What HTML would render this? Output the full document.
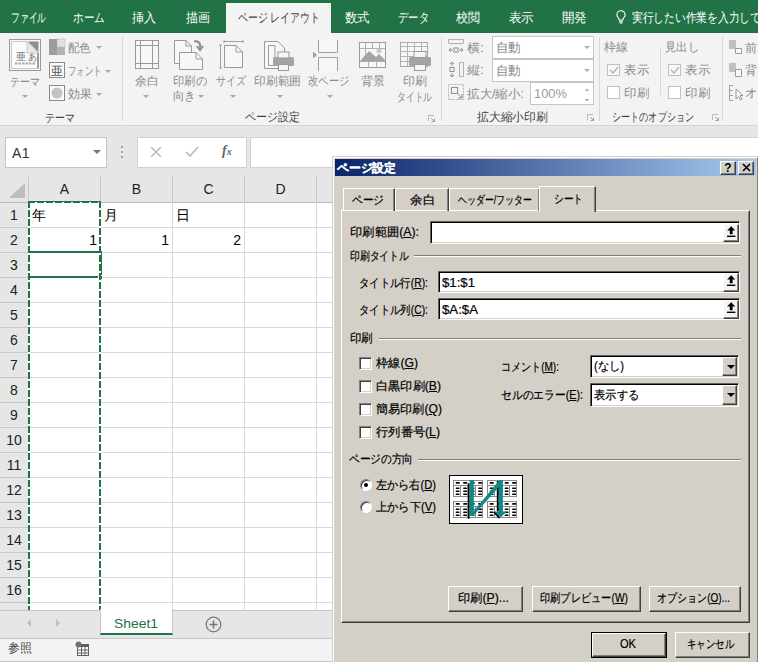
<!DOCTYPE html>
<html><head><meta charset="utf-8">
<style>
*{box-sizing:border-box;margin:0;padding:0}
html,body{width:758px;height:662px;overflow:hidden;background:#e6e6e6;font-family:"Liberation Sans",sans-serif;position:relative}
.a{position:absolute;white-space:nowrap}
svg{position:absolute;overflow:visible}
#tabs{position:absolute;left:0;top:0;width:758px;height:33px;background:#217346}
.tab{position:absolute;top:10px;font-size:13px;color:#fff;line-height:15px;white-space:nowrap}
#ribbon{position:absolute;left:0;top:33px;width:758px;height:93px;background:#f3f3f3;border-bottom:1px solid #d4d4d4}
.rl{position:absolute;font-size:12px;color:#8a8a8a;line-height:13px;white-space:nowrap}
.gl{position:absolute;font-size:12px;color:#444;line-height:13px;white-space:nowrap}
.sep{position:absolute;top:37px;width:1px;height:84px;background:#d8d8d8}
.dd{position:absolute;width:0;height:0;border-left:3px solid transparent;border-right:3px solid transparent;border-top:3px solid #a8a8a8}
.col{position:absolute;top:176px;height:26px;background:#e6e6e6;border-right:1px solid #c8c8c8;border-bottom:1px solid #bababa;font-size:14px;color:#222;text-align:center;line-height:27px}
.row{position:absolute;left:0;width:29px;height:25px;background:#e6e6e6;border-bottom:1px solid #c8c8c8;border-right:1px solid #bababa;font-size:14px;color:#222;text-align:center;line-height:24px}
.hl{position:absolute;left:29px;width:304px;height:1px;background:#d9d9d9}
.vl{position:absolute;top:202px;width:1px;height:408px;background:#d9d9d9}
.d{position:absolute;font-size:12px;color:#000;line-height:13px;white-space:nowrap;-webkit-text-stroke:0.2px currentColor}
.inp{position:absolute;background:#fff;border:1px solid;border-color:#606060 #fff #fff #606060;box-shadow:inset 1px 1px 0 #000, inset -1px -1px 0 #d4d0c8}
.btn{position:absolute;background:#d4d0c8;border:1px solid;border-color:#fff #404040 #404040 #fff;box-shadow:inset -1px -1px 0 #808080;font-size:12px;text-align:center;color:#000;white-space:nowrap}
.chk{position:absolute;width:13px;height:13px;background:#fff;border:1px solid;border-color:#808080 #fff #fff #808080;box-shadow:inset 1px 1px 0 #404040, inset -1px -1px 0 #d4d0c8}
.hr{position:absolute;height:2px;border-top:1px solid #808080;border-bottom:1px solid #fff}
u{text-decoration:underline}

</style></head><body>
<div id="tabs">
  <div class="tab" style="left:11px;--tw:35px;transform:scaleX(0.6731);transform-origin:0 0">ファイル</div>
  <div class="tab" style="left:73px;--tw:32px;transform:scaleX(0.8205);transform-origin:0 0">ホーム</div>
  <div class="tab" style="left:132px;--tw:24px;transform:scaleX(0.9231);transform-origin:0 0">挿入</div>
  <div class="tab" style="left:186px;--tw:24px;transform:scaleX(0.9231);transform-origin:0 0">描画</div>
  <div class="a" style="left:226px;top:3px;width:105px;height:31px;background:#f3f3f3"></div>
  <div class="tab" style="left:238px;color:#444;--tw:82px;transform:scaleX(0.7619);transform-origin:0 0">ページ レイアウト</div>
  <div class="tab" style="left:345px;--tw:25px;transform:scaleX(0.9615);transform-origin:0 0">数式</div>
  <div class="tab" style="left:398px;--tw:31px;transform:scaleX(0.7949);transform-origin:0 0">データ</div>
  <div class="tab" style="left:456px;--tw:24px;transform:scaleX(0.9231);transform-origin:0 0">校閲</div>
  <div class="tab" style="left:509px;--tw:25px;transform:scaleX(0.9615);transform-origin:0 0">表示</div>
  <div class="tab" style="left:562px;--tw:25px;transform:scaleX(0.9615);transform-origin:0 0">開発</div>
  <svg style="left:616px;top:10px" width="10" height="14" viewBox="0 0 10 14"><path d="M5 0.8C2.6 0.8 0.9 2.5 0.9 4.7c0 1.6 1 2.6 1.6 3.4.5.6.6 1.2.6 1.9h3.8c0-.7.1-1.3.6-1.9.6-.8 1.6-1.8 1.6-3.4C9.1 2.5 7.4.8 5 .8z" fill="none" stroke="#fff" stroke-width="1.1"/><path d="M3.1 11.3h3.8M3.5 12.9h3" stroke="#fff" stroke-width="1.1"/></svg>
  <div class="tab" style="left:632px;--tw:172px;transform:scaleX(0.8269);transform-origin:0 0">実行したい作業を入力してください</div>
</div>

<div id="ribbon"></div>
<!-- テーマ group -->
<svg style="left:9px;top:39px" width="32" height="32" viewBox="0 0 32 32">
  <rect x="0.5" y="0.5" width="31" height="31" fill="#f7f7f7" stroke="#9a9a9a"/>
  <path d="M2.5 2.5H18L29.5 14V29.5H2.5Z" fill="#fbfbfb" stroke="#c8c8c8"/>
  <path d="M18 2.5L29.5 14H18Z" fill="#e8e8e8" stroke="#c8c8c8"/>
  <path d="M19 2.5H29.5V13Z" fill="#8e8e8e"/>
  <rect x="28" y="14" width="2" height="15.5" fill="#a0a0a0"/>
  <text x="7" y="21" font-size="10" fill="#707070" font-family="Liberation Sans">亜</text>
  <text x="18.5" y="21" font-size="9" fill="#707070" font-family="Liberation Sans">あ</text>
  <path d="M6 24.5H27" stroke="#a8a8a8" stroke-width="2" stroke-dasharray="2.5 1"/>
</svg>
<div class="rl" style="left:10px;top:76px;--tw:30px;transform:scaleX(0.8333);transform-origin:0 0">テーマ</div>
<div class="dd" style="left:22px;top:95px"></div>

<svg style="left:49px;top:39px" width="16" height="16"><rect x="0" y="0" width="8" height="16" fill="#9c9c9c"/><rect x="8" y="0" width="8" height="8" fill="#e0e0e0" stroke="#b0b0b0" stroke-width="0.5"/><rect x="8" y="8" width="8" height="8" fill="#b4b4b4"/></svg>
<div class="rl" style="left:68px;top:42px;--tw:23px;transform:scaleX(0.9583);transform-origin:0 0">配色</div>
<div class="dd" style="left:96px;top:46px"></div>
<svg style="left:49px;top:62px" width="16" height="16"><rect x="0.5" y="0.5" width="15" height="15" fill="#fafafa" stroke="#8a8a8a"/><text x="2" y="13" font-size="12" fill="#555" font-family="Liberation Sans">亜</text></svg>
<div class="rl" style="left:68px;top:65px;--tw:34px;transform:scaleX(0.7083);transform-origin:0 0">フォント</div>
<div class="dd" style="left:105px;top:70px"></div>
<svg style="left:49px;top:85px" width="16" height="16"><rect x="0.5" y="0.5" width="15" height="15" fill="#fafafa" stroke="#8a8a8a"/><circle cx="8" cy="8" r="5.5" fill="#c4c4c4"/></svg>
<div class="rl" style="left:68px;top:88px;--tw:24px;transform:scaleX(1.0000);transform-origin:0 0">効果</div>
<div class="dd" style="left:96px;top:93px"></div>
<div class="gl" style="left:45px;top:112px;--tw:30px;transform:scaleX(0.8333);transform-origin:0 0">テーマ</div>
<div class="sep" style="left:122px"></div>

<!-- ページ設定 group -->
<svg style="left:135px;top:40px" width="24" height="29" viewBox="0 0 24 29"><rect x="0.5" y="0.5" width="23" height="28" fill="#f7f7f7" stroke="#9a9a9a"/><path d="M5.5 0.5V28.5M17.5 0.5V28.5M0.5 5.5H23.5M0.5 23.5H23.5" stroke="#9a9a9a"/></svg>
<div class="rl" style="left:135px;top:75px;--tw:24px;transform:scaleX(1.0000);transform-origin:0 0">余白</div>
<div class="dd" style="left:143px;top:95px"></div>

<svg style="left:173px;top:39px" width="31" height="32" viewBox="0 0 31 32"><path d="M1.5 1.5H13L18.5 7V24.5H1.5Z" fill="#f7f7f7" stroke="#9a9a9a"/><path d="M6.5 13.5H23L29.5 20V30.5H6.5Z" fill="#f7f7f7" stroke="#9a9a9a"/><path d="M23 13.5V20H29.5" fill="none" stroke="#9a9a9a"/><path d="M13 1.5V7H18.5" fill="none" stroke="#9a9a9a"/><path d="M21 2.5C25 1.5 28 4 27 8.5" fill="none" stroke="#8a8a8a" stroke-width="2"/><path d="M24 7L27 11L30 7" fill="none" stroke="#8a8a8a" stroke-width="2"/></svg>
<div class="rl" style="left:173px;top:75px;--tw:34px;transform:scaleX(0.9444);transform-origin:0 0">印刷の</div>
<div class="rl" style="left:173px;top:90px;--tw:23px;transform:scaleX(0.9583);transform-origin:0 0">向き</div>
<div class="dd" style="left:198px;top:95px"></div>

<svg style="left:219px;top:40px" width="25" height="29" viewBox="0 0 25 29"><path d="M5 1.5H24M5 0V3M24 0V3" stroke="#a0a0a0"/><path d="M1.5 5V28M0 5H3M0 28H3" stroke="#a0a0a0"/><path d="M5.5 5.5H17L23.5 12V27.5H5.5Z" fill="#f7f7f7" stroke="#9a9a9a"/><path d="M17 5.5V12H23.5" fill="none" stroke="#9a9a9a"/></svg>
<div class="rl" style="left:216px;top:75px;--tw:30px;transform:scaleX(0.8333);transform-origin:0 0">サイズ</div>
<div class="dd" style="left:230px;top:95px"></div>

<svg style="left:264px;top:40px" width="31" height="32" viewBox="0 0 31 32"><path d="M0.5 1.5H14L20.5 8V28.5H0.5Z" fill="#f7f7f7" stroke="#9a9a9a"/><path d="M4.5 5.5H11V25.5H4.5Z" fill="none" stroke="#9a9a9a"/><rect x="9" y="17" width="21" height="9" rx="1.5" fill="#a4a4a4"/><rect x="14" y="12" width="11" height="6" fill="#f7f7f7" stroke="#9a9a9a"/><rect x="14.5" y="24.5" width="10" height="6" fill="#f7f7f7" stroke="#9a9a9a"/></svg>
<div class="rl" style="left:254px;top:75px;--tw:47px;transform:scaleX(0.9792);transform-origin:0 0">印刷範囲</div>
<div class="dd" style="left:277px;top:95px"></div>

<svg style="left:312px;top:40px" width="27" height="31" viewBox="0 0 27 31"><path d="M6.5 0V12.5H25.5V0" fill="#f7f7f7" stroke="#a0a0a0"/><path d="M6.5 31V17.5H25.5V31" fill="#f7f7f7" stroke="#a0a0a0"/><path d="M1 11.5L5 15L1 18.5Z" fill="#a0a0a0"/></svg>
<div class="rl" style="left:308px;top:75px;--tw:41px;transform:scaleX(0.8542);transform-origin:0 0">改ページ</div>
<div class="dd" style="left:327px;top:95px"></div>

<svg style="left:359px;top:42px" width="27" height="26" viewBox="0 0 27 26"><rect x="0.5" y="0.5" width="26" height="25" fill="#f7f7f7" stroke="#9a9a9a"/><path d="M0.5 6.5H26.5M0.5 19.5H26.5M6.5 0.5V19.5M13.5 0.5V6.5M20.5 0.5V6.5M9.5 19.5V25.5M17.5 19.5V25.5" stroke="#b0b0b0"/><path d="M1 19L10 9L17 15L20 12L26 18V19Z" fill="#a4a4a4"/><circle cx="20" cy="9" r="2.5" fill="#c8c8c8"/></svg>
<div class="rl" style="left:361px;top:75px;--tw:24px;transform:scaleX(1.0000);transform-origin:0 0">背景</div>

<svg style="left:400px;top:42px" width="32" height="29" viewBox="0 0 32 29"><rect x="0.5" y="0.5" width="27" height="24" fill="#f7f7f7" stroke="#a8a8a8"/><path d="M0.5 4.5H27.5M0.5 9.5H27.5M0.5 14.5H27.5M0.5 19.5H27.5M7.5 0.5V24.5M14.5 0.5V24.5M21.5 0.5V24.5" stroke="#b4b4b4"/><rect x="9" y="15" width="22" height="9" rx="1.5" fill="#a4a4a4"/><rect x="14" y="9.5" width="12" height="6" fill="#f7f7f7" stroke="#9a9a9a"/><rect x="14.5" y="22.5" width="11" height="6" fill="#f7f7f7" stroke="#9a9a9a"/></svg>
<div class="rl" style="left:403px;top:75px;--tw:24px;transform:scaleX(1.0000);transform-origin:0 0">印刷</div>
<div class="rl" style="left:397px;top:91px;--tw:35px;transform:scaleX(0.7292);transform-origin:0 0">タイトル</div>
<div class="gl" style="left:245px;top:111px;--tw:55px;transform:scaleX(0.9167);transform-origin:0 0">ページ設定</div>
<svg style="left:428px;top:115px" width="8" height="8"><path d="M0.5 6V0.5H6" fill="none" stroke="#b8b8b8"/><path d="M3 3L6.5 6.5M6.5 3.5V6.5H3.5" stroke="#a0a0a0" fill="none"/></svg>
<div class="sep" style="left:441px"></div>

<!-- 拡大縮小印刷 group -->
<svg style="left:448px;top:39px" width="16" height="15"><path d="M0.5 0.5H15.5M0.5 0.5V4M15.5 0.5V4" stroke="#b0b0b0"/><path d="M0.5 4.5H15.5" stroke="#b0b0b0"/><path d="M1 11H5M11 11H15M1 11L3 9M1 11L3 13M15 11L13 9M15 11L13 13" stroke="#909090" fill="none"/><rect x="6" y="9" width="4" height="4" fill="none" stroke="#909090"/></svg>
<div class="rl" style="left:467px;top:42px;--tw:17px;transform:scaleX(1.1079);transform-origin:0 0">横:</div>
<div class="a" style="left:492px;top:36px;width:102px;height:23px;background:#fff;border:1px solid #c6c6c6"></div>
<div class="rl" style="left:496px;top:41px;font-size:13px;line-height:14px;color:#888;--tw:25px;transform:scaleX(0.9615);transform-origin:0 0">自動</div>
<div class="dd" style="left:584px;top:46px;border-top-color:#b0b0b0"></div>
<svg style="left:448px;top:61px" width="16" height="16"><path d="M11.5 1.5H15.5V15.5H11.5Z" fill="none" stroke="#b0b0b0"/><path d="M4 1V5M4 12V16M4 1L2 3M4 1L6 3M4 16L2 14M4 16L6 14" stroke="#909090" fill="none"/><rect x="2" y="6.5" width="4" height="4" fill="none" stroke="#909090"/></svg>
<div class="rl" style="left:467px;top:64px;--tw:17px;transform:scaleX(1.1079);transform-origin:0 0">縦:</div>
<div class="a" style="left:492px;top:59px;width:102px;height:23px;background:#fff;border:1px solid #c6c6c6"></div>
<div class="rl" style="left:496px;top:64px;font-size:13px;line-height:14px;color:#888;--tw:25px;transform:scaleX(0.9615);transform-origin:0 0">自動</div>
<div class="dd" style="left:584px;top:69px;border-top-color:#b0b0b0"></div>
<svg style="left:448px;top:84px" width="16" height="16"><rect x="0.5" y="0.5" width="15" height="15" fill="none" stroke="#b4b4b4" stroke-dasharray="2 1"/><rect x="3.5" y="3.5" width="6" height="6" fill="none" stroke="#909090"/><path d="M9 9L14 14M14 10V14H10" stroke="#909090" fill="none"/></svg>
<div class="rl" style="left:467px;top:88px;--tw:57px;transform:scaleX(1.0426);transform-origin:0 0">拡大/縮小:</div>
<div class="a" style="left:530px;top:82px;width:64px;height:23px;background:#fff;border:1px solid #c6c6c6"></div>
<div class="rl" style="left:534px;top:87px;font-size:13px;line-height:14px;color:#999;--tw:33px;transform:scaleX(0.9925);transform-origin:0 0">100%</div>
<svg style="left:584px;top:88px" width="7" height="14"><path d="M0.5 3L3 0.5L5.5 3Z" fill="#b8b8b8"/><path d="M0.5 11L3 13.5L5.5 11Z" fill="#a8a8a8"/></svg>
<div class="gl" style="left:477px;top:111px;--tw:71px;transform:scaleX(0.9861);transform-origin:0 0">拡大縮小印刷</div>
<svg style="left:587px;top:114px" width="8" height="8"><path d="M0.5 6V0.5H6" fill="none" stroke="#b8b8b8"/><path d="M3 3L6.5 6.5M6.5 3.5V6.5H3.5" stroke="#a0a0a0" fill="none"/></svg>
<div class="sep" style="left:599px"></div>

<!-- シートのオプション group -->
<div class="rl" style="left:604px;top:41px;--tw:24px;transform:scaleX(1.0000);transform-origin:0 0">枠線</div>
<div class="rl" style="left:665px;top:41px;--tw:34px;transform:scaleX(0.9444);transform-origin:0 0">見出し</div>
<div class="a" style="left:660px;top:48px;width:1px;height:47px;background:#d8d8d8"></div>
<div class="a" style="left:607px;top:64px;width:13px;height:12px;border:1px solid #c0c0c0;background:#f7f7f7"></div>
<svg style="left:609px;top:66px" width="10" height="8"><path d="M1 4L4 7L9 1" fill="none" stroke="#b0b0b0" stroke-width="1.2"/></svg>
<div class="rl" style="left:624px;top:64px;--tw:25px;transform:scaleX(1.0417);transform-origin:0 0">表示</div>
<div class="a" style="left:607px;top:86px;width:13px;height:13px;border:1px solid #c0c0c0;background:#fff"></div>
<div class="rl" style="left:624px;top:87px;--tw:25px;transform:scaleX(1.0417);transform-origin:0 0">印刷</div>
<div class="a" style="left:668px;top:64px;width:13px;height:12px;border:1px solid #c0c0c0;background:#f7f7f7"></div>
<svg style="left:670px;top:66px" width="10" height="8"><path d="M1 4L4 7L9 1" fill="none" stroke="#b0b0b0" stroke-width="1.2"/></svg>
<div class="rl" style="left:685px;top:64px;--tw:25px;transform:scaleX(1.0417);transform-origin:0 0">表示</div>
<div class="a" style="left:668px;top:86px;width:13px;height:13px;border:1px solid #c0c0c0;background:#fff"></div>
<div class="rl" style="left:685px;top:87px;--tw:25px;transform:scaleX(1.0417);transform-origin:0 0">印刷</div>
<div class="gl" style="left:612px;top:111px;--tw:82px;transform:scaleX(0.7593);transform-origin:0 0">シートのオプション</div>
<svg style="left:712px;top:114px" width="8" height="8"><path d="M0.5 6V0.5H6" fill="none" stroke="#b8b8b8"/><path d="M3 3L6.5 6.5M6.5 3.5V6.5H3.5" stroke="#a0a0a0" fill="none"/></svg>
<div class="sep" style="left:722px"></div>

<!-- 配置 group (partial) -->
<svg style="left:729px;top:40px" width="14" height="14"><rect x="0" y="0" width="7" height="9" fill="#c0c0c0"/><path d="M6.5 8.5H12.5V13.5H6.5Z" fill="#fafafa" stroke="#9a9a9a"/></svg>
<div class="rl" style="left:745px;top:42px">前</div>
<svg style="left:729px;top:63px" width="14" height="14"><rect x="0" y="0" width="7" height="9" fill="#c0c0c0"/><path d="M6.5 6.5H12.5V13.5H6.5Z" fill="#fafafa" stroke="#9a9a9a"/></svg>
<div class="rl" style="left:745px;top:64px">背</div>
<svg style="left:729px;top:85px" width="16" height="16"><path d="M0.5 0.5H4M0.5 0.5V15.5H4M0.5 5.5H4M0.5 10.5H4" fill="none" stroke="#a0a0a0"/><path d="M7 4L7 14L9.5 11.5L11.5 15L13 14L11 10.5H14Z" fill="#fff" stroke="#909090"/></svg>
<div class="rl" style="left:745px;top:87px">オ</div>

<!-- formula bar -->
<div class="a" style="left:5px;top:137px;width:102px;height:31px;background:#fff;border:1px solid #c6c6c6"></div>
<div class="a" style="left:12px;top:145px;font-size:14px;line-height:16px;color:#333;letter-spacing:0.5px">A1</div>
<div class="dd" style="left:93px;top:150px;border-top-color:#777;border-left-width:4px;border-right-width:4px;border-top-width:4px"></div>
<div class="a" style="left:121px;top:146px;width:2px;height:2px;background:#a0a0a0;box-shadow:0 5px 0 #a0a0a0,0 10px 0 #a0a0a0"></div>
<div class="a" style="left:137px;top:137px;width:110px;height:31px;background:#fff;border:1px solid #d0d0d0"></div>
<svg style="left:150px;top:146px" width="12" height="12"><path d="M1 1L11 11M11 1L1 11" stroke="#bdbdbd" stroke-width="1.6"/></svg>
<svg style="left:185px;top:146px" width="14" height="12"><path d="M1 6L5 10L13 1" fill="none" stroke="#bdbdbd" stroke-width="1.8"/></svg>
<div class="a" style="left:222px;top:143px;font-family:'Liberation Serif',serif;font-style:italic;font-weight:bold;font-size:14px;color:#666;line-height:16px">f<span style="font-size:10px">x</span></div>
<div class="a" style="left:250px;top:137px;width:520px;height:31px;background:#fff;border:1px solid #d0d0d0"></div>

<!-- sheet -->
<div class="a" style="left:0;top:176px;width:333px;height:434px;background:#fff"></div>
<div class="col" style="left:0;width:29px;height:27px"></div>
<svg style="left:8px;top:183px" width="18" height="16"><path d="M17 0V15H1Z" fill="#bdbdbd"/></svg>
<div class="col" style="left:29px;width:72px;height:27px">A</div>
<div class="col" style="left:101px;width:72px;height:27px">B</div>
<div class="col" style="left:173px;width:72px;height:27px">C</div>
<div class="col" style="left:245px;width:72px;height:27px">D</div>
<div class="col" style="left:317px;width:72px;height:27px"></div>
<div class="row" style="top:203px">1</div>
<div class="hl" style="top:227px"></div>
<div class="row" style="top:228px">2</div>
<div class="hl" style="top:252px"></div>
<div class="row" style="top:253px">3</div>
<div class="hl" style="top:277px"></div>
<div class="row" style="top:278px">4</div>
<div class="hl" style="top:302px"></div>
<div class="row" style="top:303px">5</div>
<div class="hl" style="top:327px"></div>
<div class="row" style="top:328px">6</div>
<div class="hl" style="top:352px"></div>
<div class="row" style="top:353px">7</div>
<div class="hl" style="top:377px"></div>
<div class="row" style="top:378px">8</div>
<div class="hl" style="top:402px"></div>
<div class="row" style="top:403px">9</div>
<div class="hl" style="top:427px"></div>
<div class="row" style="top:428px">10</div>
<div class="hl" style="top:452px"></div>
<div class="row" style="top:453px">11</div>
<div class="hl" style="top:477px"></div>
<div class="row" style="top:478px">12</div>
<div class="hl" style="top:502px"></div>
<div class="row" style="top:503px">13</div>
<div class="hl" style="top:527px"></div>
<div class="row" style="top:528px">14</div>
<div class="hl" style="top:552px"></div>
<div class="row" style="top:553px">15</div>
<div class="hl" style="top:577px"></div>
<div class="row" style="top:578px">16</div>
<div class="hl" style="top:602px"></div>
<div class="row" style="top:603px">17</div>
<div class="hl" style="top:627px"></div>
<div class="vl" style="left:100px"></div>
<div class="vl" style="left:172px"></div>
<div class="vl" style="left:244px"></div>
<div class="vl" style="left:316px"></div>
<div class="a" style="left:32px;top:207px;font-size:14px;line-height:16px;color:#000">年</div>
<div class="a" style="left:104px;top:207px;font-size:14px;line-height:16px;color:#000">月</div>
<div class="a" style="left:176px;top:207px;font-size:14px;line-height:16px;color:#000">日</div>
<div class="a" style="left:40px;top:232px;width:57px;text-align:right;font-size:14px;line-height:16px;color:#000">1</div>
<div class="a" style="left:112px;top:232px;width:57px;text-align:right;font-size:14px;line-height:16px;color:#000">1</div>
<div class="a" style="left:184px;top:232px;width:57px;text-align:right;font-size:14px;line-height:16px;color:#000">2</div>
<div class="a" style="left:28px;top:251px;width:74px;height:27px;border:2px solid #217346"></div>
<div class="a" style="left:98px;top:275px;width:5px;height:5px;background:#217346;border:1px solid #fff"></div>
<div class="a" style="left:28px;top:201px;width:73px;height:1px;background:#217346"></div><div class="a" style="left:28px;top:202px;width:73px;height:1px;background:repeating-linear-gradient(90deg,#217346 0 7px,#fff 7px 9px)"></div>
<div class="a" style="left:28px;top:201px;width:2px;height:409px;background:repeating-linear-gradient(180deg,#217346 0 7px,#fff 7px 9px)"></div>
<div class="a" style="left:99px;top:201px;width:2px;height:409px;background:repeating-linear-gradient(180deg,#217346 0 7px,#fff 7px 9px)"></div>
<div class="a" style="left:0;top:610px;width:333px;height:28px;background:#e6e6e6;border-top:1px solid #c6c6c6"></div>
<svg style="left:26px;top:619px" width="6" height="8"><path d="M5 0L1 4L5 8Z" fill="#c0c0c0"/></svg>
<svg style="left:55px;top:619px" width="6" height="8"><path d="M1 0L5 4L1 8Z" fill="#c0c0c0"/></svg>
<div class="a" style="left:100px;top:609px;width:73px;height:26px;background:#fff;border-bottom:2px solid #217346;border-left:1px solid #c6c6c6;border-right:1px solid #c6c6c6"></div>
<div class="a" style="left:114px;top:616px;font-size:13px;line-height:15px;color:#217346;--tw:44px;transform:scaleX(1.0679);transform-origin:0 0">Sheet1</div>
<svg style="left:205px;top:616px" width="17" height="17"><circle cx="8.5" cy="8.5" r="7.3" fill="none" stroke="#777" stroke-width="1.2"/><path d="M8.5 4.5V12.5M4.5 8.5H12.5" stroke="#777" stroke-width="1.6"/></svg>
<div class="a" style="left:0;top:638px;width:333px;height:24px;background:#f3f3f3;border-top:1px solid #c6c6c6;border-bottom:1px solid #c6c6c6"></div>
<div class="a" style="left:8px;top:641px;font-size:12px;line-height:14px;color:#444;--tw:24px;transform:scaleX(1.0000);transform-origin:0 0">参照</div>
<svg style="left:75px;top:641px" width="14" height="15"><rect x="2.5" y="3.5" width="11" height="11" fill="#fff" stroke="#606060"/><rect x="2" y="3" width="12" height="3" fill="#606060"/><path d="M3 9H13M3 12H13M6.5 6V14M10 6V14" stroke="#606060"/><circle cx="3.5" cy="3.5" r="3" fill="#707070"/></svg>

<!-- dialog -->
<div class="a" style="left:332px;top:156px;width:427px;height:520px;background:#d4d0c8;border:1px solid;border-color:#d4d0c8 #404040 #404040 #d4d0c8"></div>
<div class="a" style="left:333px;top:157px;width:425px;height:518px;border:1px solid;border-color:#fff #808080 #808080 #fff"></div>
<div class="a" style="left:335px;top:159px;width:421px;height:17px;background:linear-gradient(90deg,#0a246a,#a6caf0)"></div>
<div class="d" style="left:337px;top:162px;color:#fff;font-weight:bold;--tw:59px;transform:scaleX(0.9833);transform-origin:0 0">ページ設定</div>
<div class="btn" style="left:720px;top:161px;width:16px;height:14px;font-weight:bold;font-size:12px;line-height:12px">?</div>
<div class="btn" style="left:738px;top:161px;width:16px;height:14px"><svg style="left:3px;top:2px" width="9" height="8"><path d="M1 0L8 7M8 0L1 7" stroke="#000" stroke-width="1.6"/></svg></div>

<!-- tab panel -->
<div class="a" style="left:341px;top:210px;width:409px;height:413px;border:1px solid;border-color:#fff #404040 #404040 #fff"></div>
<div class="a" style="left:342px;top:211px;width:407px;height:411px;border:1px solid;border-color:transparent #808080 #808080 transparent"></div>
<!-- tabs -->
<div class="a" style="left:343px;top:188px;width:52px;height:23px;border:1px solid;border-bottom:none;border-color:#fff #404040 #fff #fff;box-shadow:inset -1px 0 0 #808080"></div>
<div class="d" style="left:352px;top:194px;--tw:32px;transform:scaleX(0.8889);transform-origin:0 0">ページ</div>
<div class="a" style="left:395px;top:188px;width:54px;height:23px;border:1px solid;border-bottom:none;border-color:#fff #404040 #fff #fff;box-shadow:inset -1px 0 0 #808080"></div>
<div class="d" style="left:410px;top:194px;--tw:25px;transform:scaleX(1.0417);transform-origin:0 0">余白</div>
<div class="a" style="left:449px;top:188px;width:91px;height:23px;border:1px solid;border-bottom:none;border-color:#fff #404040 #fff #fff;box-shadow:inset -1px 0 0 #808080"></div>
<div class="d" style="left:458px;top:194px;--tw:74px;transform:scaleX(0.7449);transform-origin:0 0">ヘッダー/フッター</div>
<div class="a" style="left:539px;top:186px;width:57px;height:26px;background:#d4d0c8;border:1px solid;border-bottom:none;border-color:#fff #404040 #fff #fff;box-shadow:inset -1px 0 0 #808080"></div>
<div class="d" style="left:554px;top:193px;--tw:29px;transform:scaleX(0.8056);transform-origin:0 0">シート</div>

<!-- 印刷範囲 -->
<div class="d" style="left:350px;top:226px;--tw:69px;transform:scaleX(1.0244);transform-origin:0 0">印刷範囲(<u>A</u>):</div>
<div class="inp" style="left:430px;top:221px;width:310px;height:23px"></div>
<div class="btn" style="background:#f4f3f0;left:723px;top:224px;width:16px;height:18px"><svg style="left:3px;top:1px" width="9" height="12" viewBox="0 0 9 12"><path d="M4.2 0.3L8.3 4.6H5.6V8.2H2.8V4.6H0.1Z" fill="#000"/><rect x="0" y="9.6" width="8.4" height="1.4" fill="#000"/></svg></div>
<div class="d" style="left:350px;top:250px;--tw:59px;transform:scaleX(0.8194);transform-origin:0 0">印刷タイトル</div>
<div class="hr" style="left:414px;top:255px;width:327px"></div>

<div class="d" style="left:359px;top:277px;--tw:69px;transform:scaleX(0.8623);transform-origin:0 0">タイトル行(<u>R</u>):</div>
<div class="inp" style="left:438px;top:271px;width:302px;height:22px"></div>
<div class="d" style="left:442px;top:277px;--tw:33px;transform:scaleX(1.0989);transform-origin:0 0">$1:$1</div>
<div class="btn" style="background:#f4f3f0;left:723px;top:273px;width:16px;height:19px"><svg style="left:3px;top:1px" width="9" height="12" viewBox="0 0 9 12"><path d="M4.2 0.3L8.3 4.6H5.6V8.2H2.8V4.6H0.1Z" fill="#000"/><rect x="0" y="9.6" width="8.4" height="1.4" fill="#000"/></svg></div>
<div class="d" style="left:359px;top:304px;--tw:69px;transform:scaleX(0.8623);transform-origin:0 0">タイトル列(<u>C</u>):</div>
<div class="inp" style="left:438px;top:298px;width:302px;height:22px"></div>
<div class="d" style="left:442px;top:304px;--tw:36px;transform:scaleX(1.1008);transform-origin:0 0">$A:$A</div>
<div class="btn" style="background:#f4f3f0;left:723px;top:300px;width:16px;height:19px"><svg style="left:3px;top:1px" width="9" height="12" viewBox="0 0 9 12"><path d="M4.2 0.3L8.3 4.6H5.6V8.2H2.8V4.6H0.1Z" fill="#000"/><rect x="0" y="9.6" width="8.4" height="1.4" fill="#000"/></svg></div>

<!-- 印刷 -->
<div class="d" style="left:350px;top:332px;--tw:23px;transform:scaleX(0.9583);transform-origin:0 0">印刷</div>
<div class="hr" style="left:379px;top:338px;width:362px"></div>
<div class="chk" style="left:359px;top:357px"></div><div class="d" style="left:376px;top:357px;--tw:42px;transform:scaleX(1.0159);transform-origin:0 0">枠線(<u>G</u>)</div>
<div class="chk" style="left:359px;top:380px"></div><div class="d" style="left:376px;top:380px;--tw:65px;transform:scaleX(1.0154);transform-origin:0 0">白黒印刷(<u>B</u>)</div>
<div class="chk" style="left:359px;top:403px"></div><div class="d" style="left:376px;top:403px;--tw:66px;transform:scaleX(1.0100);transform-origin:0 0">簡易印刷(<u>Q</u>)</div>
<div class="chk" style="left:359px;top:426px"></div><div class="d" style="left:376px;top:426px;--tw:64px;transform:scaleX(1.0209);transform-origin:0 0">行列番号(<u>L</u>)</div>

<div class="d" style="left:501px;top:361px;--tw:58px;transform:scaleX(0.8364);transform-origin:0 0">コメント(<u>M</u>):</div>
<div class="inp" style="left:590px;top:355px;width:149px;height:23px"></div>
<div class="d" style="left:594px;top:360px;--tw:30px;transform:scaleX(0.9375);transform-origin:0 0">(なし)</div>
<div class="btn" style="left:722px;top:357px;width:15px;height:19px"><svg style="left:4px;top:7px" width="8" height="4" viewBox="0 0 8 4"><path d="M0 0H8L4 4Z" fill="#000"/></svg></div>
<div class="d" style="left:501px;top:389px;--tw:82px;transform:scaleX(0.8976);transform-origin:0 0">セルのエラー(<u>E</u>):</div>
<div class="inp" style="left:590px;top:383px;width:149px;height:24px"></div>
<div class="d" style="left:594px;top:389px;--tw:45px;transform:scaleX(0.9375);transform-origin:0 0">表示する</div>
<div class="btn" style="left:722px;top:385px;width:15px;height:20px"><svg style="left:4px;top:7px" width="8" height="4" viewBox="0 0 8 4"><path d="M0 0H8L4 4Z" fill="#000"/></svg></div>

<!-- ページの方向 -->
<div class="d" style="left:349px;top:453px;--tw:64px;transform:scaleX(0.8889);transform-origin:0 0">ページの方向</div>
<div class="hr" style="left:418px;top:459px;width:323px"></div>
<div class="a" style="left:360px;top:479px;width:12px;height:12px;border-radius:50%;background:#fff;border:1px solid;border-color:#808080 #fff #fff #808080;box-shadow:inset 1px 1px 0 #404040"></div>
<div class="a" style="left:364px;top:483px;width:4px;height:4px;background:#000;border-radius:50%"></div>
<div class="d" style="left:376px;top:479px;--tw:60px;transform:scaleX(0.9278);transform-origin:0 0">左から右(<u>D</u>)</div>
<div class="a" style="left:360px;top:501px;width:12px;height:12px;border-radius:50%;background:#fff;border:1px solid;border-color:#808080 #fff #fff #808080;box-shadow:inset 1px 1px 0 #404040"></div>
<div class="d" style="left:376px;top:501px;--tw:60px;transform:scaleX(0.9373);transform-origin:0 0">上から下(<u>V</u>)</div>
<svg style="left:449px;top:475px" width="74" height="49" viewBox="0 0 74 49"><rect x="0.5" y="0.5" width="73" height="48" fill="#fff" stroke="#000"/><rect x="4.5" y="5.5" width="29" height="16" fill="#fff" stroke="#8c8c8c"/><path d="M4 10.5H34M11.5 10.5V22M19 10.5V22M26.5 10.5V22" stroke="#8c8c8c"/><rect x="6.7" y="7" width="4" height="1.8" rx="0.5" fill="#000"/><rect x="6.7" y="12.6" width="3.8" height="1.5" rx="0.5" fill="#000"/><rect x="6.7" y="15.6" width="3.8" height="1.5" rx="0.5" fill="#000"/><rect x="6.7" y="18.6" width="3.8" height="1.5" rx="0.5" fill="#000"/><rect x="14.2" y="7" width="4" height="1.8" rx="0.5" fill="#000"/><rect x="14.2" y="12.6" width="3.8" height="1.5" rx="0.5" fill="#000"/><rect x="14.2" y="15.6" width="3.8" height="1.5" rx="0.5" fill="#000"/><rect x="14.2" y="18.6" width="3.8" height="1.5" rx="0.5" fill="#000"/><rect x="21.7" y="7" width="4" height="1.8" rx="0.5" fill="#000"/><rect x="21.7" y="12.6" width="3.8" height="1.5" rx="0.5" fill="#000"/><rect x="21.7" y="15.6" width="3.8" height="1.5" rx="0.5" fill="#000"/><rect x="21.7" y="18.6" width="3.8" height="1.5" rx="0.5" fill="#000"/><rect x="29.2" y="7" width="4" height="1.8" rx="0.5" fill="#000"/><rect x="29.2" y="12.6" width="3.8" height="1.5" rx="0.5" fill="#000"/><rect x="29.2" y="15.6" width="3.8" height="1.5" rx="0.5" fill="#000"/><rect x="29.2" y="18.6" width="3.8" height="1.5" rx="0.5" fill="#000"/><rect x="38.5" y="5.5" width="29" height="16" fill="#fff" stroke="#8c8c8c"/><path d="M38 10.5H68M45.5 10.5V22M53 10.5V22M60.5 10.5V22" stroke="#8c8c8c"/><rect x="40.7" y="7" width="4" height="1.8" rx="0.5" fill="#000"/><rect x="40.7" y="12.6" width="3.8" height="1.5" rx="0.5" fill="#000"/><rect x="40.7" y="15.6" width="3.8" height="1.5" rx="0.5" fill="#000"/><rect x="40.7" y="18.6" width="3.8" height="1.5" rx="0.5" fill="#000"/><rect x="48.2" y="7" width="4" height="1.8" rx="0.5" fill="#000"/><rect x="48.2" y="12.6" width="3.8" height="1.5" rx="0.5" fill="#000"/><rect x="48.2" y="15.6" width="3.8" height="1.5" rx="0.5" fill="#000"/><rect x="48.2" y="18.6" width="3.8" height="1.5" rx="0.5" fill="#000"/><rect x="55.7" y="7" width="4" height="1.8" rx="0.5" fill="#000"/><rect x="55.7" y="12.6" width="3.8" height="1.5" rx="0.5" fill="#000"/><rect x="55.7" y="15.6" width="3.8" height="1.5" rx="0.5" fill="#000"/><rect x="55.7" y="18.6" width="3.8" height="1.5" rx="0.5" fill="#000"/><rect x="63.2" y="7" width="4" height="1.8" rx="0.5" fill="#000"/><rect x="63.2" y="12.6" width="3.8" height="1.5" rx="0.5" fill="#000"/><rect x="63.2" y="15.6" width="3.8" height="1.5" rx="0.5" fill="#000"/><rect x="63.2" y="18.6" width="3.8" height="1.5" rx="0.5" fill="#000"/><rect x="4.5" y="26.5" width="29" height="16" fill="#fff" stroke="#8c8c8c"/><path d="M4 31.5H34M11.5 31.5V43M19 31.5V43M26.5 31.5V43" stroke="#8c8c8c"/><rect x="6.7" y="28" width="4" height="1.8" rx="0.5" fill="#000"/><rect x="6.7" y="33.6" width="3.8" height="1.5" rx="0.5" fill="#000"/><rect x="6.7" y="36.6" width="3.8" height="1.5" rx="0.5" fill="#000"/><rect x="6.7" y="39.6" width="3.8" height="1.5" rx="0.5" fill="#000"/><rect x="14.2" y="28" width="4" height="1.8" rx="0.5" fill="#000"/><rect x="14.2" y="33.6" width="3.8" height="1.5" rx="0.5" fill="#000"/><rect x="14.2" y="36.6" width="3.8" height="1.5" rx="0.5" fill="#000"/><rect x="14.2" y="39.6" width="3.8" height="1.5" rx="0.5" fill="#000"/><rect x="21.7" y="28" width="4" height="1.8" rx="0.5" fill="#000"/><rect x="21.7" y="33.6" width="3.8" height="1.5" rx="0.5" fill="#000"/><rect x="21.7" y="36.6" width="3.8" height="1.5" rx="0.5" fill="#000"/><rect x="21.7" y="39.6" width="3.8" height="1.5" rx="0.5" fill="#000"/><rect x="29.2" y="28" width="4" height="1.8" rx="0.5" fill="#000"/><rect x="29.2" y="33.6" width="3.8" height="1.5" rx="0.5" fill="#000"/><rect x="29.2" y="36.6" width="3.8" height="1.5" rx="0.5" fill="#000"/><rect x="29.2" y="39.6" width="3.8" height="1.5" rx="0.5" fill="#000"/><rect x="38.5" y="26.5" width="29" height="16" fill="#fff" stroke="#8c8c8c"/><path d="M38 31.5H68M45.5 31.5V43M53 31.5V43M60.5 31.5V43" stroke="#8c8c8c"/><rect x="40.7" y="28" width="4" height="1.8" rx="0.5" fill="#000"/><rect x="40.7" y="33.6" width="3.8" height="1.5" rx="0.5" fill="#000"/><rect x="40.7" y="36.6" width="3.8" height="1.5" rx="0.5" fill="#000"/><rect x="40.7" y="39.6" width="3.8" height="1.5" rx="0.5" fill="#000"/><rect x="48.2" y="28" width="4" height="1.8" rx="0.5" fill="#000"/><rect x="48.2" y="33.6" width="3.8" height="1.5" rx="0.5" fill="#000"/><rect x="48.2" y="36.6" width="3.8" height="1.5" rx="0.5" fill="#000"/><rect x="48.2" y="39.6" width="3.8" height="1.5" rx="0.5" fill="#000"/><rect x="55.7" y="28" width="4" height="1.8" rx="0.5" fill="#000"/><rect x="55.7" y="33.6" width="3.8" height="1.5" rx="0.5" fill="#000"/><rect x="55.7" y="36.6" width="3.8" height="1.5" rx="0.5" fill="#000"/><rect x="55.7" y="39.6" width="3.8" height="1.5" rx="0.5" fill="#000"/><rect x="63.2" y="28" width="4" height="1.8" rx="0.5" fill="#000"/><rect x="63.2" y="33.6" width="3.8" height="1.5" rx="0.5" fill="#000"/><rect x="63.2" y="36.6" width="3.8" height="1.5" rx="0.5" fill="#000"/><rect x="63.2" y="39.6" width="3.8" height="1.5" rx="0.5" fill="#000"/><rect x="18.7" y="8.3" width="1.9" height="35.4" fill="#000"/><rect x="47.8" y="6" width="1.9" height="30" fill="#000"/><path d="M44.2 37.5L46.5 36.8L51 42.5L50 43.8Z" fill="#000"/><rect x="20.6" y="5" width="4.2" height="36" fill="#138784"/><path d="M20.6 41L24.2 41L53.9 7.5L50.3 5.2Z" fill="#138784"/><rect x="49.7" y="5" width="4.2" height="32" fill="#138784"/><path d="M45.3 36.4H58L51.4 42.3Z" fill="#138784"/></svg>

<!-- buttons -->
<div class="btn" style="left:448px;top:586px;width:75px;height:26px"></div>
<div class="d" style="left:458px;top:592px;--tw:51px;transform:scaleX(1.0197);transform-origin:0 0">印刷(<u>P</u>)...</div>
<div class="btn" style="left:532px;top:586px;width:109px;height:26px"></div>
<div class="d" style="left:540px;top:592px;--tw:88px;transform:scaleX(0.8517);transform-origin:0 0">印刷プレビュー(<u>W</u>)</div>
<div class="btn" style="left:649px;top:586px;width:92px;height:26px"></div>
<div class="d" style="left:657px;top:592px;--tw:73px;transform:scaleX(0.8358);transform-origin:0 0">オプション(<u>O</u>)...</div>
<div class="a" style="left:591px;top:632px;width:76px;height:26px;border:1px solid #000"></div>
<div class="btn" style="left:592px;top:633px;width:74px;height:24px"></div>
<div class="d" style="left:620px;top:638px;--tw:16px;transform:scaleX(0.9225);transform-origin:0 0">OK</div>
<div class="btn" style="left:675px;top:632px;width:75px;height:26px"></div>
<div class="d" style="left:687px;top:638px;--tw:47px;transform:scaleX(0.7833);transform-origin:0 0">キャンセル</div>

</body></html>
